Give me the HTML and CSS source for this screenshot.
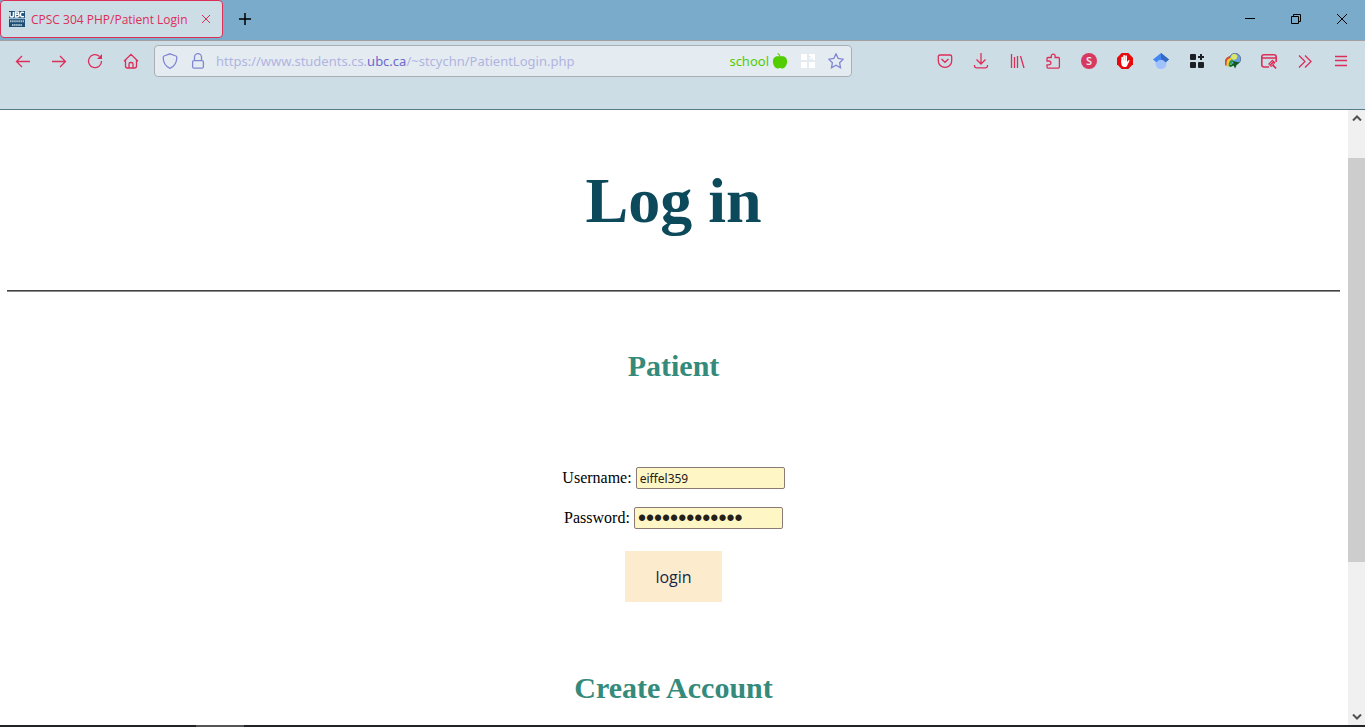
FILE: index.html
```html
<!DOCTYPE html>
<html lang="en">
<head>
<meta charset="utf-8">
<title>CPSC 304 PHP/Patient Login</title>
<link rel="stylesheet" href="styles.css">
</head>
<body>
<div class="window">
  <header class="tab-strip">
    <div class="tab">
      <svg class="icon favicon" viewBox="0 0 16 16" aria-hidden="true"><path fill="#1d4f76" d="M0 0h16v16H0z"/><path d="M1 1v3.500q0 1.500 1.700 1.500t1.700-1.500V1M6.500 1v5h2q1.600 0 1.600-1.400T8.500 3.300h-2 1.800Q9.700 3.300 9.700 2T8.300 1zM15 1.700Q11.500 0 11.500 3.500T15 5.300" fill="none" stroke="#fff" stroke-width="1.500"/><path d="M0 7.500h16" stroke="#9db8c8"/><path d="M1 10.300h14M3 14h10" stroke="#a9c0cf" stroke-width="2" stroke-dasharray="1.500 .6"/></svg>
      <span class="tab-title">CPSC 304 PHP/Patient Login</span>
      <button class="tab-close" aria-label="Close tab"><svg viewBox="0 0 10 10" width="10" height="10"><path d="M1 1l8 8M9 1L1 9"/></svg></button>
    </div>
    <button class="new-tab" aria-label="New tab"><svg viewBox="0 0 12 12" width="12" height="12"><path d="M6 0v12M0 6h12"/></svg></button>
    <div class="window-controls">
      <button aria-label="Minimize"><svg viewBox="0 0 10 10" width="10" height="10"><path d="M0 4.500h10"/></svg></button>
      <button aria-label="Restore"><svg viewBox="0 0 10 10" width="10" height="10"><path d="M.5 2.500h7v7h-7zM2.500 2.500v-2h7v7h-2"/></svg></button>
      <button aria-label="Close"><svg viewBox="0 0 10 10" width="10" height="10"><path d="M0 0l10 10M10 0L0 10"/></svg></button>
    </div>
  </header>

  <nav class="toolbar" aria-label="Navigation">
    <div class="tools">
      <button aria-label="Back"><svg class="icon" viewBox="0 0 16 16"><path d="M15 8.500H1.500M7 3L1.500 8.500 7 14"/></svg></button>
      <button aria-label="Forward"><svg class="icon" viewBox="0 0 16 16"><path d="M1 8.500h13.500M9 3l5.500 5.500L9 14"/></svg></button>
      <button aria-label="Reload"><svg class="icon" viewBox="0 0 16 16"><path d="M12.500 3.400A6.500 6.500 0 1 0 14.500 8"/><path class="solid" d="M15 1v5h-5z"/></svg></button>
      <button aria-label="Home"><svg class="icon" viewBox="0 0 16 16"><path d="M1 8.300l7-7 7 7M2.500 7v6q0 2 2 2h7q2 0 2-2V7M6 15v-4q0-1.500 1.500-1.500h1q1.500 0 1.500 1.500v4"/></svg></button>
    </div>
    <div class="address">
      <svg class="icon" viewBox="0 0 16 16" aria-hidden="true"><path d="M8 .8l6 2.200q.8.300.8 1.200C14.800 9 12 13.500 8 15.300 4 13.500 1.200 9 1.200 4.200Q1.200 3.300 2 3z"/></svg>
      <svg class="icon lock" viewBox="0 0 16 16" aria-hidden="true"><rect x="2.600" y="7.600" width="10.800" height="7.600" rx="1.500"/><path d="M4.500 7.500V4.200a3.500 3.500 0 0 1 7 0v3.300"/></svg>
      <span class="url">https://www.students.cs.<b>ubc.ca</b>/~stcychn/PatientLogin.php</span>
      <span class="container-name">school</span>
      <svg class="icon apple" viewBox="0 0 16 16" aria-hidden="true"><path d="M8 3.600C3.500 2 .9 4.800.9 8.300c0 3.800 2.300 7.200 4.600 7.200 1.200 0 1.500-.5 2.500-.5s1.300.5 2.500.5c2.300 0 4.600-3.400 4.600-7.200C15.100 4.800 12.500 2 8 3.600z"/><path d="M5.500 0Q8 .6 8.600 4L7.400 4Q7.300 1.800 5.500 1z"/></svg>
      <svg class="icon tiles" viewBox="0 0 16 16" aria-hidden="true"><path d="M1 1h6v6H1zM9 1h6v6h-2.500V4.500L10 6.500 9 5.500 11.500 3H9zM1 9h6v6H1zM9 9h6v6H9z"/></svg>
      <button class="star" aria-label="Bookmark"><svg class="icon" viewBox="0 0 16 16"><path d="M8 .9l2.200 4.600 5 .7-3.600 3.500.9 5L8 12.300l-4.500 2.400.9-5L.8 6.200l5-.7z"/></svg></button>
    </div>
    <div class="tools extensions">
      <button aria-label="Pocket"><svg class="icon" viewBox="0 0 16 16"><path d="M3 2h10q1.700 0 1.700 1.700v4a6.700 6.700 0 0 1-13.400 0v-4Q1.300 2 3 2zM4.500 6L8 9.300 11.500 6"/></svg></button>
      <button aria-label="Downloads"><svg class="icon" viewBox="0 0 16 16"><path d="M8 0v10.500M3.500 6.500L8 11l4.500-4.500M1.500 12v1q0 1.800 1.800 1.800h9.400q1.800 0 1.800-1.800v-1"/></svg></button>
      <button aria-label="Library"><svg class="icon" viewBox="0 0 16 16"><path d="M2.500 1v14M5.500 4v11M8.500 3v12M11.500 3L15 15"/></svg></button>
      <button aria-label="Extensions"><svg class="icon" viewBox="0 0 16 16"><path d="M2 8V5.500q0-1 1-1h3.300V3a1.900 1.900 0 0 1 3.800 0v1.500h3.300q1 0 1 1v8.600q0 1-1 1H3q-1 0-1-1V11.800h2a1.800 1.800 0 0 0 0-3.800H2z"/></svg></button>
      <button class="account" aria-label="Account"><span>S</span></button>
      <button aria-label="Content blocker"><svg class="icon" viewBox="0 0 16 16"><path fill="#e7090c" stroke="none" d="M4.700 0h6.600L16 4.700v6.600L11.300 16H4.700L0 11.300V4.700z"/><path d="M5.200 9V4.500M7.100 8V2.800M9.100 8V3.200" fill="none" stroke="#fff" stroke-width="1.700" stroke-linecap="round"/><path fill="#fff" stroke="none" d="M4.300 7.500H10v1.500l1.700-2 1 .6-2.700 5.300q-.6 1-1.600 1H7q-2.700-.5-2.700-4z"/></svg></button>
      <button aria-label="Scholar"><svg class="icon" viewBox="0 0 16 16"><path fill="#a0c2ff" stroke="none" d="M8 5a5 5 0 1 1 0 11A5 5 0 0 1 8 5z"/><path fill="#4285f4" stroke="none" d="M8 0L0 6.500l3.400 2.700Q8 4.500 12.600 9.200L16 6.500z"/><path fill="#356ac3" stroke="none" d="M8 0l8 6.500-3.400 2.700Q11 6.500 8 6.500z"/></svg></button>
      <button aria-label="Add tiles"><svg class="icon" viewBox="0 0 16 16"><path fill="#1c1f24" stroke="none" d="M2 1h4q1 0 1 1v4q0 1-1 1H2Q1 7 1 6V2q0-1 1-1zM2 9h4q1 0 1 1v4q0 1-1 1H2q-1 0-1-1v-4q0-1 1-1zM10 9h4q1 0 1 1v4q0 1-1 1h-4q-1 0-1-1v-4q0-1 1-1zM11 1h2v2h2v2h-2v2h-2V5H9V3h2z"/></svg></button>
      <button aria-label="Download manager"><svg class="icon" viewBox="0 0 16 16"><circle cx="10" cy="6" r="5.700" fill="#6f9fe0" stroke="#3a4d66" stroke-width=".6"/><path fill="#dce66a" stroke="none" d="M7 1.500L10 .8l2.500 2-1 3.200-3 1-3-2z"/><g fill="none" stroke-width="2"><path stroke="#d6442a" d="M1.500 12.500Q-1 6 5 4"/><path stroke="#f4cf22" d="M3 13.500Q1.500 7.500 6 5.800"/><path stroke="#279a38" d="M4.800 13.500Q3.500 9 8 7.600"/></g><path fill="#0c5d18" stroke="none" d="M8 8l6.500 1.500-2.700 2-1.700 4L8.500 12.500l-3 1.500-1-1.500 4-2z"/></svg></button>
      <button aria-label="Page tool"><svg class="icon" viewBox="0 0 16 16"><path d="M8 14H3q-2.200 0-2.200-2.200V4Q.8 1.800 3 1.800h10q2.200 0 2.200 2.200v5M1 5h14" stroke-width="1.600"/><path class="solid" d="M7 11l4.500-4.500 3 3L12.700 11.700l3 3-1.200 1.200-3-3L10 14z"/><path d="M8.500 11.500l3-3M10 12.700l2.500-2.500" stroke="#ccdde6" stroke-width=".7"/></svg></button>
      <button aria-label="More tools"><svg class="icon" viewBox="0 0 16 16"><path d="M2 2.500L8 8.500l-6 6M8 2.500l6 6-6 6"/></svg></button>
      <button aria-label="Menu"><svg class="icon" viewBox="0 0 16 16"><path d="M2 3.500h12M2 7.500h12M2 12.500h12"/></svg></button>
    </div>
  </nav>

  <div class="viewport">
    <main class="page">
      <h1>Log in</h1>
      <hr>
      <h2>Patient</h2>
      <form class="login-form">
        <p><label for="username">Username:</label> <input id="username" type="text" value="eiffel359"></p>
        <p><label for="password">Password:</label> <input id="password" type="password" value="0123456789012"></p>
        <button class="submit" type="button">login</button>
      </form>
      <h2>Create Account</h2>
    </main>
    <div class="scrollbar" aria-hidden="true">
      <svg viewBox="0 0 10 6" width="10" height="6"><path d="M1 5.500l4-4 4 4"/></svg>
      <div class="track"><div class="thumb"></div></div>
      <svg viewBox="0 0 10 6" width="10" height="6"><path d="M1 .5l4 4 4-4"/></svg>
    </div>
  </div>
  <div class="taskbar"><span></span></div>
</div>
</body>
</html>
```
FILE: styles.css
```css
* { box-sizing: border-box; }
body {
  margin: 0;
  background: #fff;
  font-family: "Noto Sans", "Open Sans", sans-serif;
}
button {
  border: 0;
  padding: 0;
  background: none;
  font: inherit;
  color: inherit;
}
svg {
  display: block;
  flex: none;
  fill: none;
  stroke: currentColor;
}
.icon { width: 16px; height: 16px; stroke-width: 1.3; }
.solid { fill: currentColor; stroke: none; }

.window {
  display: flex;
  flex-direction: column;
  height: 100vh;
  padding: 0 3px 1px 0;
}

/* Tabs */
.tab-strip {
  display: flex;
  height: 41px;
  padding-bottom: 2px;
  background: #7aabcb;
  border-bottom: 1px solid #a39fa0;
}
.tab {
  display: flex;
  align-items: center;
  width: 223px;
  padding: 0 8px;
  background: #ccdde6;
  border: 1px solid #dd2e58;
  border-radius: 4px;
  color: #dd2e58;
}
.favicon { stroke: none; }
.tab-title {
  flex: 1;
  padding-left: 6px;
  font-family: "Open Sans", sans-serif;
  font-size: 12px;
  white-space: nowrap;
}
.tab-close { display: grid; place-items: center; width: 16px; height: 16px; }
.new-tab { display: grid; place-items: center; width: 43px; color: #000; }
.new-tab svg { stroke-width: 1.5; }
.window-controls { display: flex; margin-left: auto; color: #000; }
.window-controls button { display: grid; place-items: center; width: 46px; }

/* Toolbar */
.toolbar {
  display: flex;
  align-items: flex-start;
  height: 69px;
  padding: 4px 6px 0 5px;
  background: #ccdde6;
  border-bottom: 1px solid #557b8b;
  color: #dd2e58;
}
.tools { display: flex; }
.tools button { display: grid; place-items: center; width: 36px; height: 32px; }
.extensions { margin-left: auto; }
.address {
  display: flex;
  align-items: center;
  flex: 0 1 698px;
  height: 32px;
  margin-left: 5px;
  padding: 0 7px;
  background: #e4ecf2;
  border: 1px solid #a9afb5;
  border-radius: 4px;
  color: #8086d3;
}
.lock { margin-left: 12px; }
.url {
  flex: 1;
  padding-left: 10px;
  font-size: 13px;
  white-space: nowrap;
  color: #b1b4e0;
}
.url b { font-weight: 400; color: #6c68cd; }
.container-name { font-size: 13px; color: #51cd00; }
.apple { margin-left: 3px; fill: #51cd00; stroke: none; }
.tiles { margin-left: 12px; fill: #fff; stroke: none; }
.star { margin-left: 12px; }
.account span {
  display: grid;
  place-items: center;
  width: 16px;
  height: 16px;
  border-radius: 50%;
  background: #d73a5e;
  font-size: 11px;
  font-weight: 600;
  line-height: 16px;
  color: #e8e6ee;
}

/* Page */
.viewport { display: flex; flex: 1; min-height: 0; }
.page {
  flex: 1;
  padding: 54px 8px 0 7px;
  overflow: hidden;
  text-align: center;
  font-family: "Liberation Serif", serif;
  font-size: 16px;
  color: #000;
}
h1 {
  margin: 0;
  font-size: 64px;
  line-height: 74px;
  color: #0c4a5b;
}
hr {
  height: 2px;
  margin: 52px 0 0;
  border: 0;
  border-top: 1px solid #414141;
  border-bottom: 1px solid #8a8a8a;
}
h2 {
  margin: 56px 0 0;
  font-size: 30px;
  line-height: 36px;
  color: #348a7b;
}
.login-form { padding-top: 83px; }
.login-form p { margin: 0 0 18px; line-height: 22px; }
.login-form input {
  width: 149px;
  height: 22px;
  padding: 0 3px;
  border: 1px solid #8c7a74;
  border-radius: 2px;
  background: #fff6c5;
  font-family: "Noto Sans", sans-serif;
  font-size: 12px;
  color: #23201a;
  vertical-align: top;
}
.login-form input[type="password"] { font-family: "Liberation Sans", sans-serif; font-size: 23px; }
.submit {
  min-width: 97px;
  height: 51px;
  margin-top: 4px;
  padding: 0 30px;
  background: #fdebcd;
  font-family: "Open Sans", sans-serif;
  font-size: 16px;
  color: #13284a;
}
.login-form + h2 { margin-top: 68px; }

.scrollbar {
  display: flex;
  flex-direction: column;
  align-items: center;
  width: 17px;
  padding: 5px 0;
  background: #f0f0f0;
  color: #505050;
}
.scrollbar svg { stroke-width: 2; }
.track { flex: 1; width: 100%; padding: 37px 0 152px; }
.thumb { height: 100%; background: #cdcdcd; }

.taskbar { flex: none; height: 2px; padding-left: 196px; background: #202426; }
.taskbar span { display: block; width: 48px; height: 2px; background: #555; }
```
